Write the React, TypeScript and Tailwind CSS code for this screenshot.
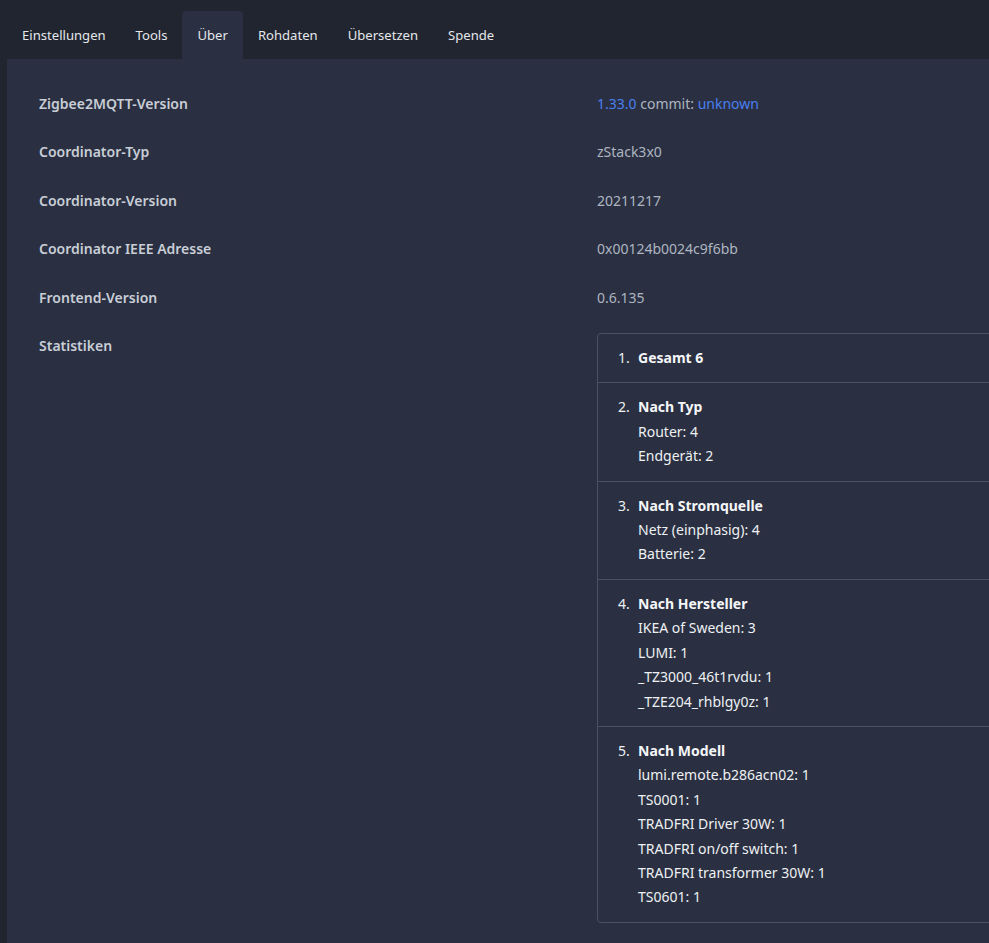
import { useState } from 'react'

const TABS = ['Einstellungen', 'Tools', 'Über', 'Rohdaten', 'Übersetzen', 'Spende']

const STATS: { title: string; items: string[] }[] = [
  { title: 'Gesamt 6', items: [] },
  { title: 'Nach Typ', items: ['Router: 4', 'Endgerät: 2'] },
  { title: 'Nach Stromquelle', items: ['Netz (einphasig): 4', 'Batterie: 2'] },
  {
    title: 'Nach Hersteller',
    items: ['IKEA of Sweden: 3', 'LUMI: 1', '_TZ3000_46t1rvdu: 1', '_TZE204_rhblgy0z: 1'],
  },
  {
    title: 'Nach Modell',
    items: [
      'lumi.remote.b286acn02: 1',
      'TS0001: 1',
      'TRADFRI Driver 30W: 1',
      'TRADFRI on/off switch: 1',
      'TRADFRI transformer 30W: 1',
      'TS0601: 1',
    ],
  },
]

function Row({ label, children }: { label: string; children: React.ReactNode }) {
  return (
    <div className="flex">
      <div className="w-[558px] shrink-0 px-3 py-3 font-semibold leading-[24.4px] text-[#c9ced6]">{label}</div>
      <div className="flex-1 px-3 py-3 leading-[24.4px] text-[#aeb5c0]">{children}</div>
    </div>
  )
}

export default function App() {
  const [active, setActive] = useState('Über')

  return (
    <div
      className="min-h-[943px] w-full overflow-hidden bg-[#21252f] text-[14px]"
      style={{ fontFamily: '"Noto Sans", "Open Sans", sans-serif' }}
    >
      {/* Tabs */}
      <div className="flex pl-[7px] pt-[11px]">
        {TABS.map((t) => (
          <button
            key={t}
            onClick={() => setActive(t)}
            className={`rounded-t px-[15px] py-3 text-[13.1px] leading-6 text-[#e4e7eb] ${
              active === t ? 'bg-[#2a3042]' : ''
            }`}
          >
            {t}
          </button>
        ))}
      </div>

      {/* Content */}
      <div className="ml-[7px] min-h-[885px] w-[1200px] bg-[#2a3042] px-5 pt-[21px]">
        <Row label="Zigbee2MQTT-Version">
          <span className="text-[#4a7ff0]">1.33.0</span> commit:{' '}
          <span className="text-[#4a7ff0]">unknown</span>
        </Row>
        <Row label="Coordinator-Typ">zStack3x0</Row>
        <Row label="Coordinator-Version">20211217</Row>
        <Row label="Coordinator IEEE Adresse">0x00124b0024c9f6bb</Row>
        <Row label="Frontend-Version">0.6.135</Row>
        <div className="flex">
          <div className="w-[558px] shrink-0 px-3 py-3 font-semibold leading-[24.4px] text-[#c9ced6]">
            Statistiken
          </div>
          <div className="flex-1 px-3 pt-[11px]">
            <div className="w-[560px] rounded border border-[#4a5162]">
              {STATS.map((s, i) => (
                <div
                  key={s.title}
                  className={`flex px-5 py-3 leading-[24.4px] text-[#eef0f3] ${
                    i > 0 ? 'border-t border-[#4a5162]' : ''
                  }`}
                >
                  <span className="w-5 shrink-0">{i + 1}.</span>
                  <div>
                    <div className="font-bold text-[#f5f6f8]">{s.title}</div>
                    {s.items.map((it) => (
                      <div key={it}>{it}</div>
                    ))}
                  </div>
                </div>
              ))}
            </div>
          </div>
        </div>
      </div>
    </div>
  )
}
